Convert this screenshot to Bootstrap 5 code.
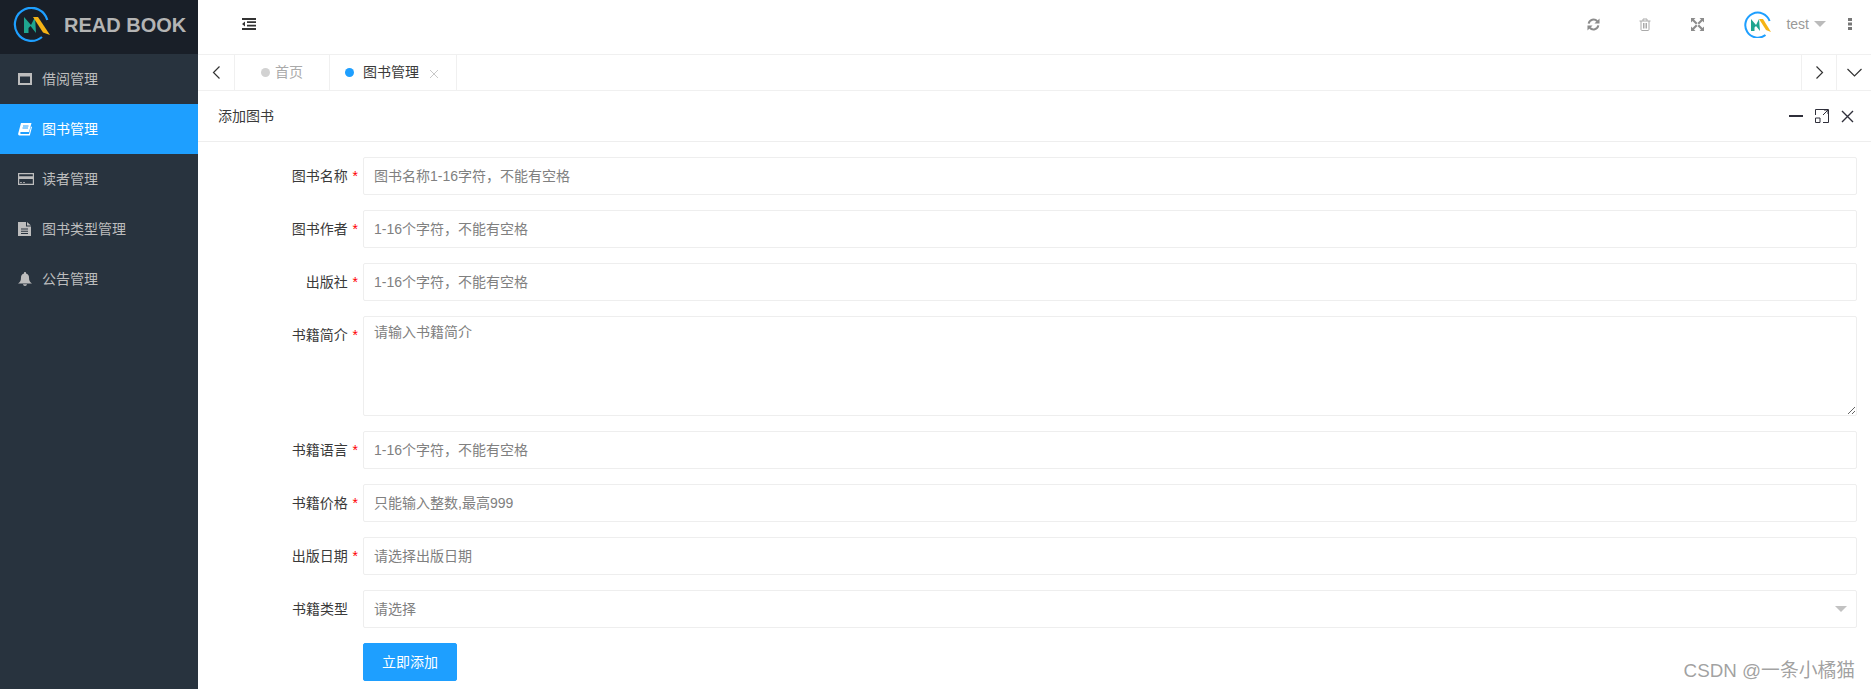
<!DOCTYPE html>
<html lang="zh-CN">
<head>
    <meta charset="UTF-8">
    <meta name="viewport" content="width=device-width, initial-scale=1.0">
    <title>READ BOOK</title>
    <link href="https://cdn.jsdelivr.net/npm/bootstrap@5.3.0/dist/css/bootstrap.min.css" rel="stylesheet">
    <style>
        body {
            font-family: "Liberation Sans", "Noto Sans CJK SC", sans-serif;
            font-size: 14px;
            color: #3a3a3a;
            overflow: hidden;
            background: #fff;
        }
        .side-bar { width: 198px; background: #28333e; flex: none; }
        .side-logo { height: 54px; background: #191f28; padding: 0 0 4px 13px; gap: 14px; }
        .side-logo span { font-size: 20px; font-weight: 700; color: #b4b4b4; }
        .side-item { height: 50px; padding-left: 18px; color: #bdbdbd; text-decoration: none; gap: 10px; }
        .side-item svg { width: 14px; height: 14px; fill: #bdbdbd; flex: none; }
        .side-item.on { background: #1e9fff; color: #fff; }
        .side-item.on svg { fill: #fff; }
        .top-bar { height: 54px; padding: 0 19px 6px 44px; }
        .top-tool { width: 52px; }
        .top-face { margin-left: 21px; }
        .top-user { color: #999; margin-left: 15px; }
        .top-caret { border-style: solid; border-width: 6px 6px 0; border-color: #bbb transparent transparent; margin-left: 5px; }
        .top-dots { margin-left: 22px; }
        .tab-bar { height: 37px; border-top: 1px solid #f0f0f0; border-bottom: 1px solid #f0f0f0; }
        .tab-btn { width: 37px; border-right: 1px solid #f0f0f0; }
        .tab-btn.end { border-right: 0; border-left: 1px solid #f0f0f0; width: 35px; }
        .tab-item { border-right: 1px solid #f0f0f0; }
        .tab-home { width: 95px; padding-left: 26px; color: #aaa; }
        .tab-cur { width: 127px; padding-left: 15px; }
        .tab-dot { width: 9px; height: 9px; border-radius: 50%; background: #d2d2d2; margin-right: 5px; }
        .tab-cur .tab-dot { background: #1e9fff; margin-right: 9px; }
        .tab-x { margin-left: 11px; margin-top: 2px; }
        .win-head { height: 51px; padding: 0 17px 0 20px; border-bottom: 1px solid #eee; }
        .win-tools { gap: 12px; }
        .add-form { padding: 15px 14px 0 0; }
        .add-row { display: flex; margin-bottom: 15px; }
        .add-label { width: 165px; flex: none; padding-right: 5px; text-align: right; line-height: 38px; }
        .add-label b { color: #f00; font-weight: 400; margin-left: 1px; }
        .add-label i { display: inline-block; width: 6px; }
        .add-input.form-control {
            height: 38px;
            padding: 6px 10px;
            font-size: 14px;
            line-height: 24px;
            border: 1px solid #eee;
            border-radius: 2px;
            color: #333;
        }
        textarea.add-input.form-control { height: 100px; padding-top: 3px; }
        .add-input::placeholder { color: #808080; opacity: 1; }
        .add-edge {
            position: absolute;
            right: 10px;
            top: 16px;
            border-style: solid;
            border-width: 6px 6px 0;
            border-color: #c2c2c2 transparent transparent;
        }
        .add-btn.btn {
            margin-left: 165px;
            width: 94px;
            height: 38px;
            padding: 0;
            font-size: 14px;
            background: #1e9fff;
            border-color: #1e9fff;
            border-radius: 2px;
            color: #fff;
        }
        .csdn-mark { position: absolute; right: 16px; top: 658px; font-size: 18.8px; line-height: 26px; color: rgba(120,120,120,.7); }
    </style>
</head>
<body>
<div class="d-flex vh-100">
    <div class="side-bar">
        <div class="side-logo d-flex align-items-center">
            <svg width="37" height="36" viewBox="0 0 37 36">
                <path d="M29 30A16.500 16.500 0 1 1 34.300 13" fill="none" stroke="#1e9fff" stroke-width="2.200"/>
                <path d="M11 26V10l7 8 4-8 1 16-5.500-7-2 2v5z" fill="#1fa58f"/>
                <path d="M20 10h5l12 18-7-2.500z" fill="#f5b316"/>
            </svg>
            <span>READ BOOK</span>
        </div>
        <a class="side-item d-flex align-items-center" href="#">
            <svg viewBox="0 0 14 14"><path d="M0 1h14v12H0zM2 4.500v6.500h10V4.500z" fill-rule="evenodd"/></svg>
            借阅管理
        </a>
        <a class="side-item on d-flex align-items-center" href="#">
            <svg viewBox="0 0 14 14"><path d="M3 1h10.500l-2.500 9H3c-1 0-1.200 2 .2 2H11l2-7.500 1 .5-2.200 8.500H1.500C.5 13.500 0 12.500 .2 11.500zM5 3.500v1h5.500v-1zm-.5 2v1h5.500v-1z" fill-rule="evenodd"/></svg>
            图书管理
        </a>
        <a class="side-item d-flex align-items-center" href="#">
            <svg style="width:16px;margin-right:-2px" viewBox="0 0 16 14"><path d="M0 1h16v12H0zM1.200 2.200v2h13.600v-2zM1.200 7v4.800h13.600V7zM2 10h2v.8H2zm3 0h2v.8H5z" fill-rule="evenodd"/></svg>
            读者管理
        </a>
        <a class="side-item d-flex align-items-center" href="#">
            <svg viewBox="0 0 14 14"><path d="M0 0h8v4.500h5V14H0zM9 0l4 3.500H9zM3 6.500v1h7v-1zm0 2.300v1h7v-1zm0 2.300v1h7v-1z" fill-rule="evenodd"/></svg>
            图书类型管理
        </a>
        <a class="side-item d-flex align-items-center" href="#">
            <svg viewBox="0 0 14 14"><path d="M7 0c.6 0 1 .4 1 1v.6c2 .4 3 2 3 4 0 3.500 1 4.500 3 6H0C2 10.100 3 9.100 3 5.600c0-2 1-3.600 3-4V1c0-.6.4-1 1-1zM5 12.300h4C8.800 13.500 8 14 7 14s-1.800-.5-2-1.700z"/></svg>
            公告管理
        </a>
    </div>
    <div class="flex-grow-1">
        <div class="top-bar d-flex align-items-center">
            <svg width="14" height="12" viewBox="0 0 14 12"><path d="M0 0h14v2H0zM5 3.300h9v1.800H5zM5 6.800h9v1.800H5zM0 10h14v2H0zM3 3.500v5L0 6z" fill="#333"/></svg>
            <div class="ms-auto d-flex align-items-center">
                <div class="top-tool d-flex justify-content-center">
                    <svg width="13" height="13" viewBox="0 0 14 14" fill="none" stroke="#8c8c8c" stroke-width="2.200"><path d="M1.800 6A5.300 5.300 0 0 1 11 3.500M12.200 8A5.300 5.300 0 0 1 3 10.500"/><path d="M13.500 .5v5.500H8zM.5 13.500V8H6z" fill="#8c8c8c" stroke="none"/></svg>
                </div>
                <div class="top-tool d-flex justify-content-center">
                    <svg width="12" height="13" viewBox="0 0 12 13" fill="none" stroke="#aaa" stroke-width="1"><path d="M.5 3h11M2 3v8.500c0 .6.400 1 1 1h6c.6 0 1-.4 1-1V3M4 3V1h4v2M4.500 5v5.500M6 5v5.500M7.500 5v5.500"/></svg>
                </div>
                <div class="top-tool d-flex justify-content-center">
                    <svg width="13" height="13" viewBox="0 0 13 13" fill="#8c8c8c"><path d="M0 0h4.500L3 1.500 6.500 5 5 6.500 1.500 3 0 4.500zM13 0v4.500L11.500 3 8 6.500 6.500 5 10 1.500 8.500 0zM0 13V8.500L1.500 10 5 6.500 6.500 8 3 11.500 4.500 13zM13 13H8.500L10 11.500 6.500 8 8 6.500 11.500 10 13 8.500z"/></svg>
                </div>
                <svg class="top-face" width="27" height="27" viewBox="0 0 27 27">
                    <path d="M21.500 24A12.500 12.500 0 1 1 25.600 10" fill="none" stroke="#1e9fff" stroke-width="2"/>
                    <path d="M7 20V8l5 6 3-6 1 12-4-5-1.500 1.500V20z" fill="#1fa58f"/>
                    <path d="M15 8h4l8 13-5-2z" fill="#f5b316"/>
                </svg>
                <span class="top-user">test</span>
                <span class="top-caret"></span>
                <svg class="top-dots" width="4" height="12" viewBox="0 0 4 12" fill="#777"><path d="M0 0h4v3H0zM0 4.500h4v3H0zM0 9h4v3H0z"/></svg>
            </div>
        </div>
        <div class="tab-bar d-flex">
            <div class="tab-btn d-flex align-items-center justify-content-center">
                <svg width="9" height="13" viewBox="0 0 9 13" fill="none" stroke="#333" stroke-width="1.200"><path d="M7.500 .5L1.500 6.500l6 6"/></svg>
            </div>
            <div class="tab-item tab-home d-flex align-items-center"><span class="tab-dot"></span>首页</div>
            <div class="tab-item tab-cur d-flex align-items-center"><span class="tab-dot"></span>图书管理<svg class="tab-x" width="8" height="8" viewBox="0 0 8 8" fill="none" stroke="#c8c8c8"><path d="M0 0l8 8M8 0L0 8"/></svg></div>
            <div class="tab-btn end ms-auto d-flex align-items-center justify-content-center">
                <svg width="9" height="13" viewBox="0 0 9 13" fill="none" stroke="#333" stroke-width="1.200"><path d="M1.500 .5l6 6-6 6"/></svg>
            </div>
            <div class="tab-btn end d-flex align-items-center justify-content-center">
                <svg width="15" height="9" viewBox="0 0 15 9" fill="none" stroke="#333" stroke-width="1.200"><path d="M.5 1l7 7 7-7"/></svg>
            </div>
        </div>
        <div class="win-head d-flex align-items-center justify-content-between">
            <span>添加图书</span>
            <div class="win-tools d-flex align-items-center">
                <svg width="14" height="14" viewBox="0 0 14 14"><path d="M0 6h14v2H0z" fill="#2f2f3a"/></svg>
                <svg width="14" height="14" viewBox="0 0 14 14" fill="none" stroke="#2f2f3a"><path d="M.5 6V.5h13v13H8M8 6l5-5M9 1h4v4M.5 9h4.500v4.500H.5z"/></svg>
                <svg width="13" height="13" viewBox="0 0 13 13" fill="none" stroke="#2f2f3a" stroke-width="1.400"><path d="M1 1l11 11M12 1L1 12"/></svg>
            </div>
        </div>
        <form class="add-form">
            <div class="add-row">
                <label class="add-label">图书名称 <b>*</b></label>
                <input class="add-input form-control" placeholder="图书名称1-16字符，不能有空格">
            </div>
            <div class="add-row">
                <label class="add-label">图书作者 <b>*</b></label>
                <input class="add-input form-control" placeholder="1-16个字符，不能有空格">
            </div>
            <div class="add-row">
                <label class="add-label">出版社 <b>*</b></label>
                <input class="add-input form-control" placeholder="1-16个字符，不能有空格">
            </div>
            <div class="add-row">
                <label class="add-label">书籍简介 <b>*</b></label>
                <textarea class="add-input form-control" placeholder="请输入书籍简介"></textarea>
            </div>
            <div class="add-row">
                <label class="add-label">书籍语言 <b>*</b></label>
                <input class="add-input form-control" placeholder="1-16个字符，不能有空格">
            </div>
            <div class="add-row">
                <label class="add-label">书籍价格 <b>*</b></label>
                <input class="add-input form-control" placeholder="只能输入整数,最高999">
            </div>
            <div class="add-row">
                <label class="add-label">出版日期 <b>*</b></label>
                <input class="add-input form-control" placeholder="请选择出版日期">
            </div>
            <div class="add-row">
                <label class="add-label">书籍类型 <i></i></label>
                <div class="position-relative flex-grow-1">
                    <input class="add-input form-control" placeholder="请选择" readonly>
                    <span class="add-edge"></span>
                </div>
            </div>
            <button type="button" class="add-btn btn">立即添加</button>
        </form>
    </div>
</div>
<div class="csdn-mark">CSDN @一条小橘猫</div>
<script src="https://cdn.jsdelivr.net/npm/bootstrap@5.3.0/dist/js/bootstrap.bundle.min.js"></script>
</body>
</html>
